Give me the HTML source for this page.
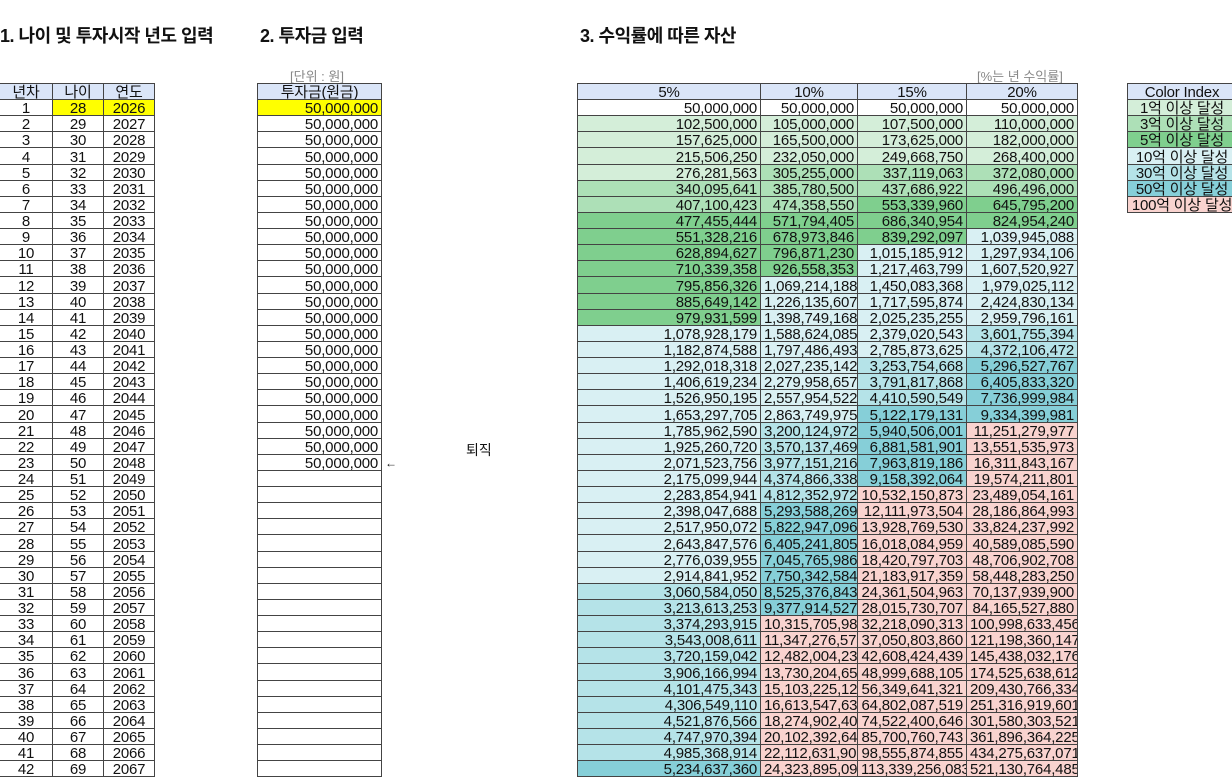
<!DOCTYPE html>
<html><head><meta charset="utf-8"><style>
body{margin:0;width:1232px;height:778px;background:#fff;position:relative;overflow:hidden;font-family:"Liberation Sans","Noto Sans CJK KR",sans-serif;color:#111}
.t{position:absolute;top:22px;font-weight:bold;font-size:18px;letter-spacing:-0.5px}
.u{position:absolute;top:66px;font-size:13px;color:#888}
table{position:absolute;top:83px;border-collapse:collapse;table-layout:fixed}
td{height:15.14px;padding:0 3px;font-size:15px;line-height:13px;vertical-align:bottom;text-align:right;overflow:hidden;white-space:nowrap;border:1px solid #444;letter-spacing:-0.2px}
tr.h td{height:15px;background:#dae5f8;text-align:center}
.c td{text-align:center}
.y{background:#ff0}
.a{background:#d4eed9}.b{background:#ade0b7}.c5{background:#7fcf8e}.d{background:#d9f0f3}.e{background:#b5e3e8}.f{background:#86cfd8}.g{background:#f9d3cf}
</style></head><body>
<div class="t" style="left:0">1. 나이 및 투자시작 년도 입력</div>
<div class="t" style="left:260px">2. 투자금 입력</div>
<div class="t" style="left:580px">3. 수익률에 따른 자산</div>
<div class="u" style="left:290px">[단위 : 원]</div>
<div class="u" style="left:977px">[%는 년 수익률]</div>
<div style="position:absolute;left:466px;top:440px;font-size:14px">퇴직</div>
<div style="position:absolute;left:385px;top:456px;font-size:12px">←</div>

<table class="c" style="left:-1px;width:155px">
<col style="width:53px"><col style="width:51px"><col style="width:51px">
<tr class="h"><td>년차</td><td>나이</td><td>연도</td></tr>
<tr><td>1</td><td class="y">28</td><td class="y">2026</td></tr>
<tr><td>2</td><td>29</td><td>2027</td></tr><tr><td>3</td><td>30</td><td>2028</td></tr><tr><td>4</td><td>31</td><td>2029</td></tr><tr><td>5</td><td>32</td><td>2030</td></tr><tr><td>6</td><td>33</td><td>2031</td></tr><tr><td>7</td><td>34</td><td>2032</td></tr><tr><td>8</td><td>35</td><td>2033</td></tr><tr><td>9</td><td>36</td><td>2034</td></tr><tr><td>10</td><td>37</td><td>2035</td></tr><tr><td>11</td><td>38</td><td>2036</td></tr><tr><td>12</td><td>39</td><td>2037</td></tr><tr><td>13</td><td>40</td><td>2038</td></tr><tr><td>14</td><td>41</td><td>2039</td></tr><tr><td>15</td><td>42</td><td>2040</td></tr><tr><td>16</td><td>43</td><td>2041</td></tr><tr><td>17</td><td>44</td><td>2042</td></tr><tr><td>18</td><td>45</td><td>2043</td></tr><tr><td>19</td><td>46</td><td>2044</td></tr><tr><td>20</td><td>47</td><td>2045</td></tr><tr><td>21</td><td>48</td><td>2046</td></tr><tr><td>22</td><td>49</td><td>2047</td></tr><tr><td>23</td><td>50</td><td>2048</td></tr><tr><td>24</td><td>51</td><td>2049</td></tr><tr><td>25</td><td>52</td><td>2050</td></tr><tr><td>26</td><td>53</td><td>2051</td></tr><tr><td>27</td><td>54</td><td>2052</td></tr><tr><td>28</td><td>55</td><td>2053</td></tr><tr><td>29</td><td>56</td><td>2054</td></tr><tr><td>30</td><td>57</td><td>2055</td></tr><tr><td>31</td><td>58</td><td>2056</td></tr><tr><td>32</td><td>59</td><td>2057</td></tr><tr><td>33</td><td>60</td><td>2058</td></tr><tr><td>34</td><td>61</td><td>2059</td></tr><tr><td>35</td><td>62</td><td>2060</td></tr><tr><td>36</td><td>63</td><td>2061</td></tr><tr><td>37</td><td>64</td><td>2062</td></tr><tr><td>38</td><td>65</td><td>2063</td></tr><tr><td>39</td><td>66</td><td>2064</td></tr><tr><td>40</td><td>67</td><td>2065</td></tr><tr><td>41</td><td>68</td><td>2066</td></tr><tr><td>42</td><td>69</td><td>2067</td></tr>
</table>

<table style="left:257px;width:125px">
<tr class="h"><td>투자금(원금)</td></tr>
<tr><td class="y">50,000,000</td></tr>
<tr><td>50,000,000</td></tr><tr><td>50,000,000</td></tr><tr><td>50,000,000</td></tr><tr><td>50,000,000</td></tr><tr><td>50,000,000</td></tr><tr><td>50,000,000</td></tr><tr><td>50,000,000</td></tr><tr><td>50,000,000</td></tr><tr><td>50,000,000</td></tr><tr><td>50,000,000</td></tr><tr><td>50,000,000</td></tr><tr><td>50,000,000</td></tr><tr><td>50,000,000</td></tr><tr><td>50,000,000</td></tr><tr><td>50,000,000</td></tr><tr><td>50,000,000</td></tr><tr><td>50,000,000</td></tr><tr><td>50,000,000</td></tr><tr><td>50,000,000</td></tr><tr><td>50,000,000</td></tr><tr><td>50,000,000</td></tr><tr><td>50,000,000</td></tr>
<tr><td></td></tr><tr><td></td></tr><tr><td></td></tr><tr><td></td></tr><tr><td></td></tr><tr><td></td></tr><tr><td></td></tr><tr><td></td></tr><tr><td></td></tr><tr><td></td></tr><tr><td></td></tr><tr><td></td></tr><tr><td></td></tr><tr><td></td></tr><tr><td></td></tr><tr><td></td></tr><tr><td></td></tr><tr><td></td></tr><tr><td></td></tr>
</table>

<table style="left:577px;width:500px">
<col style="width:183px"><col style="width:97px"><col style="width:109px"><col style="width:111px">
<tr class="h"><td>5%</td><td>10%</td><td>15%</td><td>20%</td></tr>
<tr><td>50,000,000</td><td>50,000,000</td><td>50,000,000</td><td>50,000,000</td></tr>
<tr><td class="a">102,500,000</td><td class="a">105,000,000</td><td class="a">107,500,000</td><td class="a">110,000,000</td></tr>
<tr><td class="a">157,625,000</td><td class="a">165,500,000</td><td class="a">173,625,000</td><td class="a">182,000,000</td></tr>
<tr><td class="a">215,506,250</td><td class="a">232,050,000</td><td class="a">249,668,750</td><td class="a">268,400,000</td></tr>
<tr><td class="a">276,281,563</td><td class="b">305,255,000</td><td class="b">337,119,063</td><td class="b">372,080,000</td></tr>
<tr><td class="b">340,095,641</td><td class="b">385,780,500</td><td class="b">437,686,922</td><td class="b">496,496,000</td></tr>
<tr><td class="b">407,100,423</td><td class="b">474,358,550</td><td class="c5">553,339,960</td><td class="c5">645,795,200</td></tr>
<tr><td class="c5">477,455,444</td><td class="c5">571,794,405</td><td class="c5">686,340,954</td><td class="c5">824,954,240</td></tr>
<tr><td class="c5">551,328,216</td><td class="c5">678,973,846</td><td class="c5">839,292,097</td><td class="d">1,039,945,088</td></tr>
<tr><td class="c5">628,894,627</td><td class="c5">796,871,230</td><td class="d">1,015,185,912</td><td class="d">1,297,934,106</td></tr>
<tr><td class="c5">710,339,358</td><td class="c5">926,558,353</td><td class="d">1,217,463,799</td><td class="d">1,607,520,927</td></tr>
<tr><td class="c5">795,856,326</td><td class="d">1,069,214,188</td><td class="d">1,450,083,368</td><td class="d">1,979,025,112</td></tr>
<tr><td class="c5">885,649,142</td><td class="d">1,226,135,607</td><td class="d">1,717,595,874</td><td class="d">2,424,830,134</td></tr>
<tr><td class="c5">979,931,599</td><td class="d">1,398,749,168</td><td class="d">2,025,235,255</td><td class="d">2,959,796,161</td></tr>
<tr><td class="d">1,078,928,179</td><td class="d">1,588,624,085</td><td class="d">2,379,020,543</td><td class="e">3,601,755,394</td></tr>
<tr><td class="d">1,182,874,588</td><td class="d">1,797,486,493</td><td class="d">2,785,873,625</td><td class="e">4,372,106,472</td></tr>
<tr><td class="d">1,292,018,318</td><td class="d">2,027,235,142</td><td class="e">3,253,754,668</td><td class="f">5,296,527,767</td></tr>
<tr><td class="d">1,406,619,234</td><td class="d">2,279,958,657</td><td class="e">3,791,817,868</td><td class="f">6,405,833,320</td></tr>
<tr><td class="d">1,526,950,195</td><td class="d">2,557,954,522</td><td class="e">4,410,590,549</td><td class="f">7,736,999,984</td></tr>
<tr><td class="d">1,653,297,705</td><td class="d">2,863,749,975</td><td class="f">5,122,179,131</td><td class="f">9,334,399,981</td></tr>
<tr><td class="d">1,785,962,590</td><td class="e">3,200,124,972</td><td class="f">5,940,506,001</td><td class="g">11,251,279,977</td></tr>
<tr><td class="d">1,925,260,720</td><td class="e">3,570,137,469</td><td class="f">6,881,581,901</td><td class="g">13,551,535,973</td></tr>
<tr><td class="d">2,071,523,756</td><td class="e">3,977,151,216</td><td class="f">7,963,819,186</td><td class="g">16,311,843,167</td></tr>
<tr><td class="d">2,175,099,944</td><td class="e">4,374,866,338</td><td class="f">9,158,392,064</td><td class="g">19,574,211,801</td></tr>
<tr><td class="d">2,283,854,941</td><td class="e">4,812,352,972</td><td class="g">10,532,150,873</td><td class="g">23,489,054,161</td></tr>
<tr><td class="d">2,398,047,688</td><td class="f">5,293,588,269</td><td class="g">12,111,973,504</td><td class="g">28,186,864,993</td></tr>
<tr><td class="d">2,517,950,072</td><td class="f">5,822,947,096</td><td class="g">13,928,769,530</td><td class="g">33,824,237,992</td></tr>
<tr><td class="d">2,643,847,576</td><td class="f">6,405,241,805</td><td class="g">16,018,084,959</td><td class="g">40,589,085,590</td></tr>
<tr><td class="d">2,776,039,955</td><td class="f">7,045,765,986</td><td class="g">18,420,797,703</td><td class="g">48,706,902,708</td></tr>
<tr><td class="d">2,914,841,952</td><td class="f">7,750,342,584</td><td class="g">21,183,917,359</td><td class="g">58,448,283,250</td></tr>
<tr><td class="e">3,060,584,050</td><td class="f">8,525,376,843</td><td class="g">24,361,504,963</td><td class="g">70,137,939,900</td></tr>
<tr><td class="e">3,213,613,253</td><td class="f">9,377,914,527</td><td class="g">28,015,730,707</td><td class="g">84,165,527,880</td></tr>
<tr><td class="e">3,374,293,915</td><td class="g">10,315,705,980</td><td class="g">32,218,090,313</td><td class="g">100,998,633,456</td></tr>
<tr><td class="e">3,543,008,611</td><td class="g">11,347,276,578</td><td class="g">37,050,803,860</td><td class="g">121,198,360,147</td></tr>
<tr><td class="e">3,720,159,042</td><td class="g">12,482,004,236</td><td class="g">42,608,424,439</td><td class="g">145,438,032,176</td></tr>
<tr><td class="e">3,906,166,994</td><td class="g">13,730,204,659</td><td class="g">48,999,688,105</td><td class="g">174,525,638,612</td></tr>
<tr><td class="e">4,101,475,343</td><td class="g">15,103,225,125</td><td class="g">56,349,641,321</td><td class="g">209,430,766,334</td></tr>
<tr><td class="e">4,306,549,110</td><td class="g">16,613,547,638</td><td class="g">64,802,087,519</td><td class="g">251,316,919,601</td></tr>
<tr><td class="e">4,521,876,566</td><td class="g">18,274,902,401</td><td class="g">74,522,400,646</td><td class="g">301,580,303,521</td></tr>
<tr><td class="e">4,747,970,394</td><td class="g">20,102,392,642</td><td class="g">85,700,760,743</td><td class="g">361,896,364,225</td></tr>
<tr><td class="e">4,985,368,914</td><td class="g">22,112,631,906</td><td class="g">98,555,874,855</td><td class="g">434,275,637,071</td></tr>
<tr><td class="f">5,234,637,360</td><td class="g">24,323,895,096</td><td class="g">113,339,256,083</td><td class="g">521,130,764,485</td></tr>
</table>

<table class="c" style="left:1127px;width:110px">
<tr class="h"><td>Color Index</td></tr>
<tr><td class="a">1억 이상 달성</td></tr>
<tr><td class="b">3억 이상 달성</td></tr>
<tr><td class="c5">5억 이상 달성</td></tr>
<tr><td class="d">10억 이상 달성</td></tr>
<tr><td class="e">30억 이상 달성</td></tr>
<tr><td class="f">50억 이상 달성</td></tr>
<tr><td class="g">100억 이상 달성</td></tr>
</table>
</body></html>
